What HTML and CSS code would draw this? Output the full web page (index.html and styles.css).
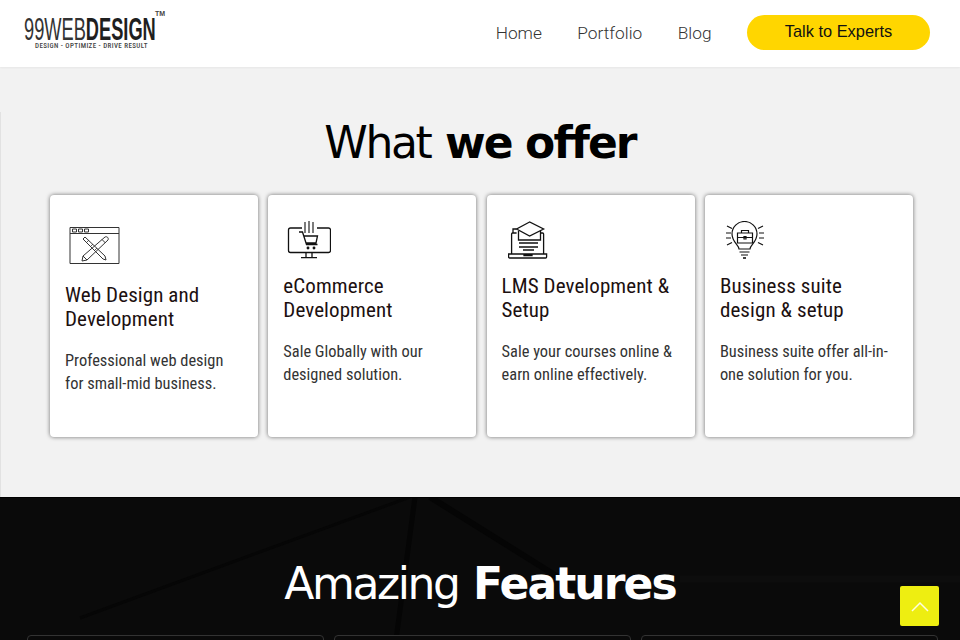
FILE: index.html
```html
<!DOCTYPE html>
<html lang="en">
<head>
<meta charset="utf-8">
<title>99WebDesign</title>
<link rel="stylesheet" href="styles.css">
</head>
<body>
<header class="site-header">
  <a class="logo" href="#">
    <span class="logo-main"><span class="logo-thin">99WEB</span><span class="logo-bold">DESIGN</span></span>
    <span class="logo-tm">TM</span>
    <span class="logo-tag">DESIGN - OPTIMIZE - DRIVE RESULT</span>
  </a>
  <nav class="nav">
    <a href="#">Home</a>
    <a href="#">Portfolio</a>
    <a href="#">Blog</a>
    <a class="cta" href="#">Talk to Experts</a>
  </nav>
</header>
<main>
  <section class="offer">
    <h2 class="heading">What <b>we offer</b></h2>
    <div class="cards">
      <article class="card">
        <div class="icon icon-tall">
          <svg class="svg-web" width="52" height="40" viewBox="0 0 52 40" fill="none" stroke="#333" stroke-width="1">
            <path d="M1 1.500h49v36H1z"/><path d="M1 7.500h49"/>
            <path d="M3.500 3h4v3h-4zM9.500 3h4v3h-4zM15.500 3h4v3h-4z"/>
            <path d="M14 13l20 20 3 1-1-4-20-19z"/><path d="M17 17l3-3M21 21l3-3M25 25l3-3" stroke-width=".8"/>
            <path d="M36 11l-22 19-1 5 5-1 21-20c1-2-1-4-3-3z"/><path d="M14 30l4 4M33 13.500l3.500 3.500"/>
          </svg>
        </div>
        <h3>Web Design and Development</h3>
        <p>Professional web design for small-mid business.</p>
      </article>
      <article class="card">
        <div class="icon">
          <svg class="svg-cart" width="44" height="38" viewBox="0 0 44 38" fill="none" stroke="#111" stroke-width="1.300">
            <path d="M15 7H3.500Q1.500 7 1.500 9v20.500q0 2 2 2h38q2 0 2-2V9q0-2-2-2H30"/>
            <path d="M19 31.500v5M25 31.500v5M14 36.700h16"/>
            <path d="M18 1v11M22 0v12M26 1v11" stroke-width="1.100"/>
            <path d="M12 11h3.500l4 12.500h11M17 15h13.500l-1.500 7H19"/>
            <circle cx="21" cy="27" r=".8"/><circle cx="27" cy="27" r=".8"/>
          </svg>
        </div>
        <h3>eCommerce Development</h3>
        <p>Sale Globally with our designed solution.</p>
      </article>
      <article class="card">
        <div class="icon">
          <svg class="svg-lms" width="40" height="38" viewBox="0 0 40 38" fill="none" stroke="#111" stroke-width="1.300">
            <path d="M3.600 33V13q0-1 1-1h4M35.600 33V13q0-1-1-1h-2"/>
            <path d="M.6 33h38v3q0 1-1 1H1.600q-1 0-1-1zM16 33v1.500h8V33"/>
            <path d="M21.600 1L8.600 8l13 7 14-7z"/>
            <path d="M10.500 10v9h22v-9"/><path d="M8.600 8H5v4"/>
            <path d="M11 22h19M11 26h19M15 29h11" stroke-width="1.700"/>
          </svg>
        </div>
        <h3>LMS Development &amp; Setup</h3>
        <p>Sale your courses online &amp; earn online effectively.</p>
      </article>
      <article class="card">
        <div class="icon">
          <svg class="svg-bulb" width="38" height="38" viewBox="0 0 38 38" fill="none" stroke="#111" stroke-width="1.200">
            <path d="M13 28c0-4-7-7-7-15a12.500 12.500 0 0 1 25 0c0 8-7 11-7 15z"/>
            <path d="M13.500 31h10M15 34h7"/><path d="M17 37h3" stroke-width="1.600"/>
            <path d="M11.500 12h15v10h-15zM11.500 16.500h15M15.500 12V9.500h7V12M18 15.500h2v2.500h-2z"/>
            <path d="M1 5l5 2.500M0 12h5M0 17h5M1 24l5-2.500M37 5l-5 2.500M38 12h-5M38 17h-5M37 24l-5-2.500"/>
          </svg>
        </div>
        <h3>Business suite design &amp; setup</h3>
        <p>Business suite offer all-in-one solution for you.</p>
      </article>
    </div>
  </section>
  <section class="features">
    <svg class="features-bg" width="960" height="143" viewBox="0 0 960 143" fill="none" aria-hidden="true">
      <path d="M80 121L410 0" stroke="#060606" stroke-width="3"/>
      <path d="M415 0L396 143" stroke="#050505" stroke-width="5"/>
      <path d="M430 0L590 100" stroke="#050505" stroke-width="6"/>
      <path d="M680 82H960" stroke="#0d0d0d" stroke-width="7"/>
    </svg>
    <h2 class="heading heading-light">Amazing <b>Features</b></h2>
    <div class="feature-row">
      <div class="feature"></div>
      <div class="feature"></div>
      <div class="feature"></div>
    </div>
  </section>
</main>
<a class="to-top" href="#" aria-label="Back to top">
  <svg width="20" height="12" viewBox="0 0 20 12" fill="none" stroke="#fffde0" stroke-width="1.500"><path d="M2 11l8-8 8 8"/></svg>
</a>
</body>
</html>
```

FILE: styles.css
```css
* { box-sizing: border-box; }
html, body { margin: 0; padding: 0; }
body {
  width: 960px;
  height: 640px;
  overflow: hidden;
  position: relative;
  background: #f2f2f2;
  font-family: "Roboto", "Liberation Sans", sans-serif;
}
a { text-decoration: none; color: inherit; }

.site-header {
  height: 67px;
  background: #fff;
  box-shadow: 0 1px 2px rgba(0,0,0,.05);
  display: flex;
  align-items: center;
  justify-content: space-between;
  padding: 0 30px 0 24px;
  position: relative;
}
.logo {
  position: relative;
  display: block;
  width: 140px;
  height: 40px;
  margin-top: -4px;
  color: #222;
}
.logo-main {
  position: absolute;
  left: 0;
  top: 5px;
  display: block;
  white-space: nowrap;
  font-family: "Liberation Sans", sans-serif;
  font-size: 32px;
  line-height: 24px;
  transform: scaleX(.57);
  transform-origin: 0 50%;
}
.logo-thin { font-weight: 400; color: #333; }
.logo-bold { font-weight: 700; color: #1f1f1f; }
.logo-tm {
  position: absolute;
  left: 131px;
  top: -2px;
  font: 700 7px/7px "Liberation Sans", sans-serif;
  color: #444;
}
.logo-tag {
  position: absolute;
  left: 11px;
  top: 30px;
  white-space: nowrap;
  font: 500 7px/8px "Roboto", sans-serif;
  font-stretch: condensed;
  letter-spacing: .4px;
  color: #444;
}

.nav { display: flex; align-items: center; gap: 35.500px; }
.nav a {
  font-size: 17.300px;
  font-weight: 300;
  color: #333;
  margin-top: -2px;
}
.nav .cta {
  width: 183px;
  height: 35px;
  margin-top: -2px;
  border-radius: 18px;
  background: #ffd600;
  color: #111;
  font: 400 16.400px/33px "Liberation Sans", sans-serif;
  text-align: center;
}

.heading {
  margin: 0;
  text-align: center;
  font-family: "DejaVu Sans", sans-serif;
  font-weight: 400;
  font-size: 44px;
  line-height: 56px;
  letter-spacing: -2.400px;
  word-spacing: 3px;
  color: #000;
}
.heading b { font-weight: 700; letter-spacing: -1.900px; word-spacing: 0; }
.heading-light { color: #fff; position: relative; }

.offer {
  position: relative;
  height: 430px;
  padding-top: 48px;
}
.offer::before {
  content: "";
  position: absolute;
  left: 0;
  top: 45px;
  bottom: 0;
  width: 1px;
  background: #e2e2e2;
}
.cards {
  display: flex;
  gap: 10.300px;
  margin: 24px 0 0 50px;
}
.card {
  width: 208px;
  height: 242px;
  background: #fff;
  border-radius: 4px;
  box-shadow: 0 0 4px rgba(0,0,0,.55);
  padding: 26px 15px 0;
}
.icon { height: 53px; display: flex; align-items: flex-start; }
.icon-tall { height: 62px; padding-top: 5px; }
.svg-web { margin-left: 4px; }
.svg-cart { margin-left: 4px; }
.svg-lms { margin-left: 6px; }
.svg-bulb { margin-left: 6px; }
.card h3 {
  margin: 0;
  font-family: "Roboto", sans-serif;
  font-stretch: condensed;
  font-weight: 400;
  font-size: 21px;
  line-height: 24px;
  letter-spacing: .1px;
  color: #1c1010;
}
.card p {
  margin: 18px 0 0;
  font-family: "Roboto", sans-serif;
  font-stretch: condensed;
  font-weight: 400;
  font-size: 16.400px;
  line-height: 23px;
  color: #333;
}

.features {
  position: relative;
  height: 143px;
  padding-top: 58px;
  background: #0a0a0a;
  border-top: 1px solid #000;
  overflow: hidden;
}
.features-bg { position: absolute; left: 0; top: -1px; }
.feature-row {
  position: relative;
  display: flex;
  gap: 10px;
  margin: 23px 0 0 27px;
}
.feature {
  width: 297px;
  height: 40px;
  border: 1px solid #333;
  border-radius: 4px;
  background: #0a0a0a;
}
.to-top {
  position: absolute;
  left: 900px;
  top: 586px;
  width: 39px;
  height: 40px;
  background: #eeee11;
  border-radius: 2px;
  display: flex;
  align-items: center;
  justify-content: center;
}
```
